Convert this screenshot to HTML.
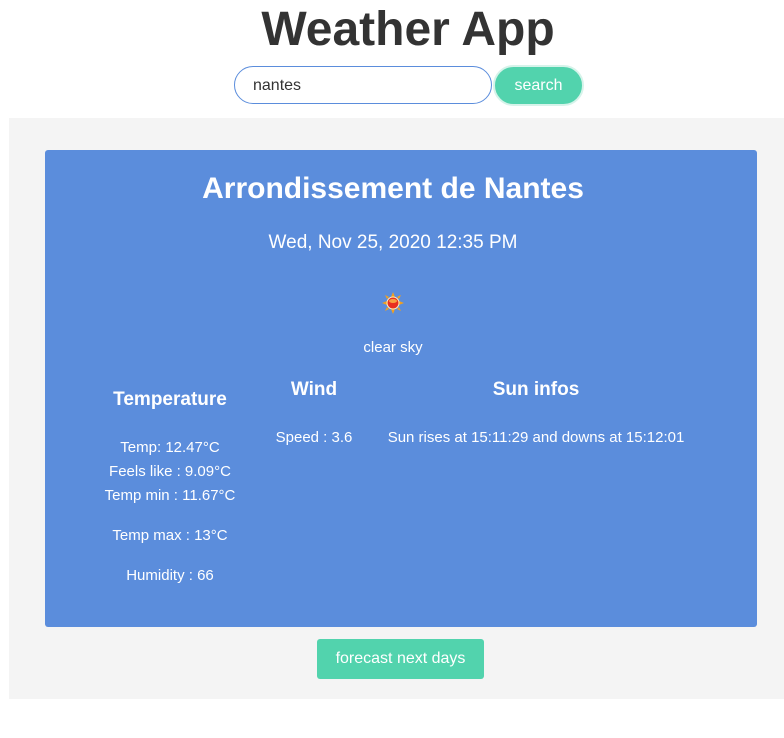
<!DOCTYPE html>
<html><head><meta charset="utf-8"><style>
body{margin:0;width:784px;height:738px;background:#fff;font-family:"Liberation Sans","DejaVu Sans",sans-serif;position:relative;overflow:hidden}
.a{position:absolute;white-space:nowrap}
.c{transform:translateX(-50%)}
h1{margin:0;font-size:48px;font-weight:bold;color:#333}
.card{position:absolute;left:45px;top:150px;width:712px;height:477px;background:#5b8ddc;border-radius:3px;color:#fff}
.card .a{color:#fff}
</style></head><body>
<div class="a c" style="left:408px;top:2px"><h1>Weather App</h1></div>
<div class="a" style="left:234px;top:66px;width:258px;height:38px;border:1px solid #5b8ddc;border-radius:20px;box-sizing:border-box;font-size:16px;color:#333;padding:10px 0 0 18px">nantes</div>
<div class="a" style="left:493px;top:65px;width:91px;height:41px;background:#52d3ad;border:2px solid #d6f3ea;box-sizing:border-box;border-radius:21px;color:#fff;font-size:16px;text-align:center;line-height:37px">search</div>
<div class="a" style="left:9px;top:118px;width:775px;height:581px;background:#f4f4f4"></div>
<div class="card">
<div class="a c" style="left:348px;top:22px;font-size:30px;font-weight:bold">Arrondissement de Nantes</div>
<div class="a c" style="left:348px;top:82px;font-size:19px">Wed, Nov 25, 2020 12:35 PM</div>
<svg class="a" style="left:337px;top:142px" width="22" height="22" viewBox="0 0 22 22"><g fill="#f0a020"><polygon points="11,0 13,5 9,5"/><polygon points="11,22 13,17 9,17"/><polygon points="0,11 5,9 5,13"/><polygon points="22,11 17,9 17,13"/><polygon points="3,3 7,5 5,7"/><polygon points="19,3 15,5 17,7"/><polygon points="3,19 7,17 5,15"/><polygon points="19,19 15,17 17,15"/></g><circle cx="11" cy="11" r="6" fill="#e83020" stroke="#fff3c0" stroke-width="1"/><ellipse cx="11" cy="9" rx="4" ry="2" fill="#f8a040"/></svg>
<div class="a c" style="left:348px;top:189px;font-size:15px">clear sky</div>
<div class="a c" style="left:125px;top:239px;font-size:19px;font-weight:bold">Temperature</div>
<div class="a c" style="left:269px;top:229px;font-size:19px;font-weight:bold">Wind</div>
<div class="a c" style="left:491px;top:229px;font-size:19px;font-weight:bold">Sun infos</div>
<div class="a c" style="left:125px;top:289px;font-size:15px">Temp: 12.47°C</div>
<div class="a c" style="left:125px;top:313px;font-size:15px">Feels like : 9.09°C</div>
<div class="a c" style="left:125px;top:337px;font-size:15px">Temp min : 11.67°C</div>
<div class="a c" style="left:125px;top:377px;font-size:15px">Temp max : 13°C</div>
<div class="a c" style="left:125px;top:417px;font-size:15px">Humidity : 66</div>
<div class="a c" style="left:269px;top:279px;font-size:15px">Speed : 3.6</div>
<div class="a c" style="left:491px;top:279px;font-size:15px">Sun rises at 15:11:29 and downs at 15:12:01</div>
</div>
<div class="a" style="left:317px;top:639px;width:167px;height:40px;background:#52d3ad;border-radius:3px;color:#fff;font-size:16px;text-align:center;line-height:40px">forecast next days</div>
</body></html>
